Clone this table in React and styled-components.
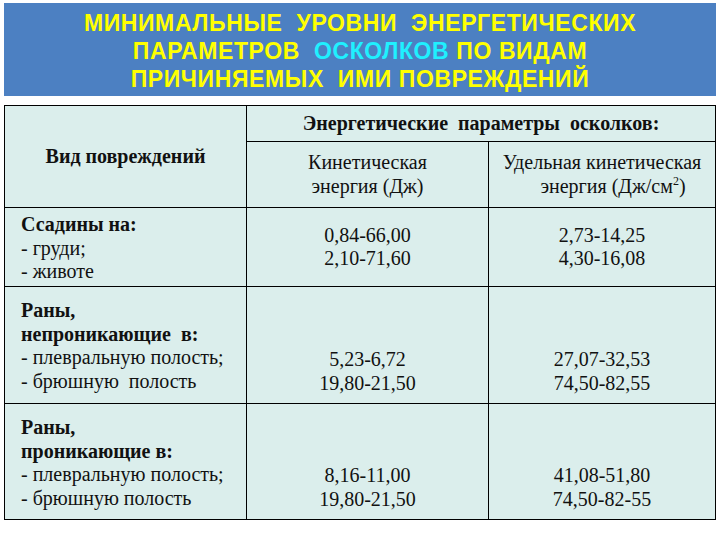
import React from "react";
import styled, { createGlobalStyle } from "styled-components";

const Global = createGlobalStyle`
  html, body { margin: 0; padding: 0; background: #ffffff; }
  body { width: 720px; height: 540px; overflow: hidden; font-family: "Liberation Serif", serif; }
`;

const Page = styled.div`
  padding: 3px 4px 0 4px;
  display: flex;
  flex-direction: column;
  gap: 9px;
`;

const Banner = styled.div`
  background: #4c80c2;
  width: 712px;
  height: 93px;
  padding-top: 2px;
  box-sizing: border-box;
  display: flex;
  flex-direction: column;
  justify-content: center;
  align-items: center;
  font-family: "Liberation Sans", Arial, sans-serif;
  font-weight: bold;
  font-size: 23px;
  line-height: 28px;
  color: #ffff00;
  letter-spacing: 0.6px;
  white-space: pre;
`;

const Accent = styled.span`
  color: #1ff0ff;
`;

const Table = styled.table`
  border-collapse: collapse;
  width: 711px;
  table-layout: fixed;
  background: #dbeeec;
`;

const Cell = styled.td`
  border: 1px solid #000;
  font-family: "Liberation Serif", serif;
  font-size: 20px;
  line-height: 23.5px;
  white-space: pre;
  color: #111;
  box-sizing: border-box;
  text-align: ${(p) => (p.$left ? "left" : "center")};
  vertical-align: ${(p) => (p.$bottom ? "bottom" : p.$top ? "top" : "middle")};
  padding: ${(p) => (p.$pad ? p.$pad : "0px")};
  font-weight: ${(p) => (p.$bold ? 700 : 400)};
`;

const Bold = styled.span`
  font-weight: 700;
`;

const Line = styled.div`
  padding-left: ${(p) => (p.$indent ? p.$indent : 0)}px;
`;

const Sup = styled.sup`
  font-size: 12px;
  line-height: 0;
`;

const rows = [
  {
    h: 79,
    label: ["Ссадины на:"],
    items: ["- груди;", "- животе"],
    k: ["0,84-66,00", "2,10-71,60"],
    u: ["2,73-14,25", "4,30-16,08"],
    bottom: false,
    pad: "5px 16px 2px 16px",
    numPad: "0px",
  },
  {
    h: 117,
    label: ["Раны,", "непроникающие  в:"],
    items: ["- плевральную полость;", "- брюшную  полость"],
    k: ["5,23-6,72", "19,80-21,50"],
    u: ["27,07-32,53", "74,50-82,55"],
    bottom: true,
    pad: "12px 16px 8px 16px",
    numPad: "0px 0px 8px 0px",
  },
  {
    h: 116,
    label: ["Раны,", "проникающие в:"],
    items: ["- плевральную полость;", "- брюшную полость"],
    k: ["8,16-11,00", "19,80-21,50"],
    u: ["41,08-51,80", "74,50-82-55"],
    bottom: true,
    pad: "12px 16px 8px 16px",
    numPad: "0px 0px 8px 0px",
  },
];

export default function App() {
  return (
    <>
      <Global />
      <Page>
        <Banner>
          <div>МИНИМАЛЬНЫЕ  УРОВНИ  ЭНЕРГЕТИЧЕСКИХ</div>
          <div>
            ПАРАМЕТРОВ  <Accent>ОСКОЛКОВ</Accent> ПО ВИДАМ
          </div>
          <div>ПРИЧИНЯЕМЫХ  ИМИ ПОВРЕЖДЕНИЙ</div>
        </Banner>
        <Table>
          <colgroup>
            <col style={{ width: 242 }} />
            <col style={{ width: 242 }} />
            <col style={{ width: 227 }} />
          </colgroup>
          <tbody>
            <tr style={{ height: 36 }}>
              <Cell rowSpan={2} $bold>
                Вид повреждений
              </Cell>
              <Cell colSpan={2} $bold>
                Энергетические  параметры  осколков:
              </Cell>
            </tr>
            <tr style={{ height: 66 }}>
              <Cell>
                <Line>Кинетическая</Line>
                <Line>энергия (Дж)</Line>
              </Cell>
              <Cell>
                <Line>Удельная кинетическая</Line>
                <Line $indent={22}>
                  энергия (Дж/см<Sup>2</Sup>)
                </Line>
              </Cell>
            </tr>
            {rows.map((r, i) => (
              <tr key={i} style={{ height: r.h }}>
                <Cell $left $top $pad={r.pad}>
                  {r.label.map((t) => (
                    <Line key={t}>
                      <Bold>{t}</Bold>
                    </Line>
                  ))}
                  {r.items.map((t) => (
                    <Line key={t}>{t}</Line>
                  ))}
                </Cell>
                <Cell $bottom={r.bottom} $pad={r.numPad}>
                  {r.k.map((t) => (
                    <Line key={t}>{t}</Line>
                  ))}
                </Cell>
                <Cell $bottom={r.bottom} $pad={r.numPad}>
                  {r.u.map((t) => (
                    <Line key={t}>{t}</Line>
                  ))}
                </Cell>
              </tr>
            ))}
          </tbody>
        </Table>
      </Page>
    </>
  );
}
